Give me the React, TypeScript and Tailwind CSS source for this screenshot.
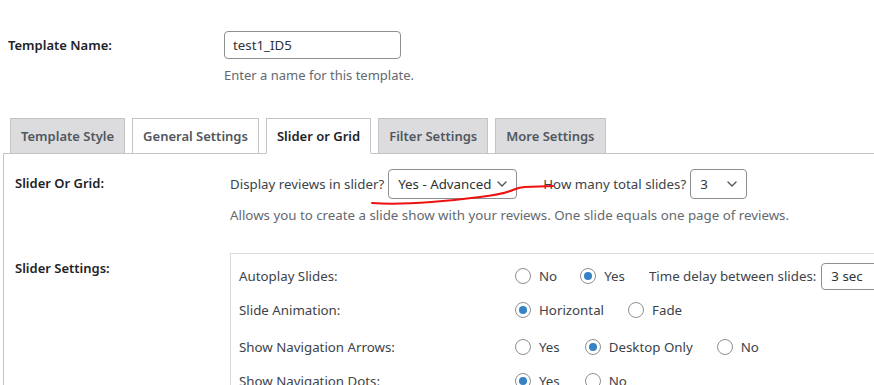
import { ChevronDown } from 'lucide-react'

const font = { fontFamily: '"Noto Sans", "Open Sans", sans-serif' }

function Radio({ checked, label, className = '' }: { checked?: boolean; label: string; className?: string }) {
  return (
    <label className={`flex items-center whitespace-nowrap ${className}`}>
      <span className="w-4 h-4 rounded-full border border-[#8c8f94] bg-white flex items-center justify-center shrink-0">
        {checked && <span className="w-2 h-2 rounded-full bg-[#3582c4]" />}
      </span>
      <span className="ml-2 text-[#3c434a]">{label}</span>
    </label>
  )
}

function Select({ value, className = '' }: { value: string; className?: string }) {
  return (
    <div
      className={`flex items-center justify-between whitespace-nowrap border border-[#8c8f94] rounded-[4px] bg-white pl-[9px] pr-[6px] text-[#2c3338] shrink-0 ${className}`}
    >
      <span>{value}</span>
      <ChevronDown className="w-4 h-4 text-[#50575e]" strokeWidth={2} />
    </div>
  )
}

const tabs = ['Template Style', 'General Settings', 'Slider or Grid', 'Filter Settings', 'More Settings']
const activeTab = 2
const whiteTabs = [1, 2]

export default function App() {
  return (
    <div className="w-[874px] h-[385px] overflow-hidden bg-white text-[13.3px] leading-5 relative" style={font}>
      <div className="w-[920px]">
        {/* template name */}
        <div className="flex items-center pt-[31px]">
          <div className="w-[224px] pl-2 font-semibold text-[13px] text-[#1d2327]">Template Name:</div>
          <div className="w-[177px] h-[28px] border border-[#8c8f94] rounded-[4px] px-2 flex items-center text-[#2c3338]">
            test1_ID5
          </div>
        </div>
        <div className="pl-[224px] mt-[6px] text-[13px] text-[#646970]">Enter a name for this template.</div>

        {/* tabs */}
        <div className="flex pl-[10px] mt-[33px] gap-[7px] relative z-10">
          {tabs.map((t, i) => (
            <div
              key={t}
              className={`h-[36px] -mb-px px-[10px] flex items-center border border-[#c3c4c7] font-semibold text-[13px] ${
                i === activeTab ? 'bg-white border-b-white text-[#1d2327]' : whiteTabs.includes(i) ? 'bg-white text-[#50575e]' : 'bg-[#dcdcde] text-[#50575e]'
              }`}
            >
              {t}
            </div>
          ))}
        </div>

        {/* panel */}
        <div className="ml-[3px] border border-[#c3c4c7] pt-[15px] pl-[11px] h-[400px]">
          <div className="flex">
            <div className="w-[215px] pt-[4px] font-semibold text-[13px] text-[#1d2327]">Slider Or Grid:</div>
            <div>
              <div className="flex items-center text-[#3c434a]">
                <span>Display reviews in slider?</span>
                <Select value="Yes - Advanced" className="ml-[4px] w-[129px] h-[30px]" />
                <span className="ml-[26px]">How many total slides?</span>
                <Select value="3" className="ml-[4px] w-[57px] h-[30px]" />
              </div>
              <div className="mt-[6px] text-[#646970]">
                Allows you to create a slide show with your reviews. One slide equals one page of reviews.
              </div>
            </div>
          </div>

          <div className="flex mt-[28px]">
            <div className="w-[215px] pt-[5px] font-semibold text-[13px] text-[#1d2327]">Slider Settings:</div>
            <div className="flex-1 border border-[#dcdcde] pl-[8px] pt-[9px] text-[#3c434a]">
              <div className="flex items-center h-[26px]">
                <div className="w-[276px]">Autoplay Slides:</div>
                <Radio label="No" />
                <Radio label="Yes" checked className="ml-[23px]" />
                <span className="ml-[24px] whitespace-nowrap">Time delay between slides:</span>
                <Select value="3 sec" className="ml-[5px] w-[80px] h-[27px]" />
              </div>
              <div className="flex items-center h-[26px] mt-[8px]">
                <div className="w-[276px]">Slide Animation:</div>
                <Radio label="Horizontal" checked />
                <Radio label="Fade" className="ml-[24px]" />
              </div>
              <div className="flex items-center h-[26px] mt-[11px]">
                <div className="w-[276px]">Show Navigation Arrows:</div>
                <Radio label="Yes" />
                <Radio label="Desktop Only" checked className="ml-[25px]" />
                <Radio label="No" className="ml-[24px]" />
              </div>
              <div className="flex items-center h-[26px] mt-[8px]">
                <div className="w-[276px]">Show Navigation Dots:</div>
                <Radio label="Yes" checked />
                <Radio label="No" className="ml-[25px]" />
              </div>
            </div>
          </div>
        </div>
      </div>

      {/* red pen mark */}
      <svg className="absolute left-0 top-0 pointer-events-none" width="874" height="385">
        <path
          d="M372 203 C 400 205, 440 202, 480 197 S 510 188, 525 187 L 553 186"
          fill="none"
          stroke="#ee1111"
          strokeWidth="2"
          strokeLinecap="round"
        />
      </svg>
    </div>
  )
}
